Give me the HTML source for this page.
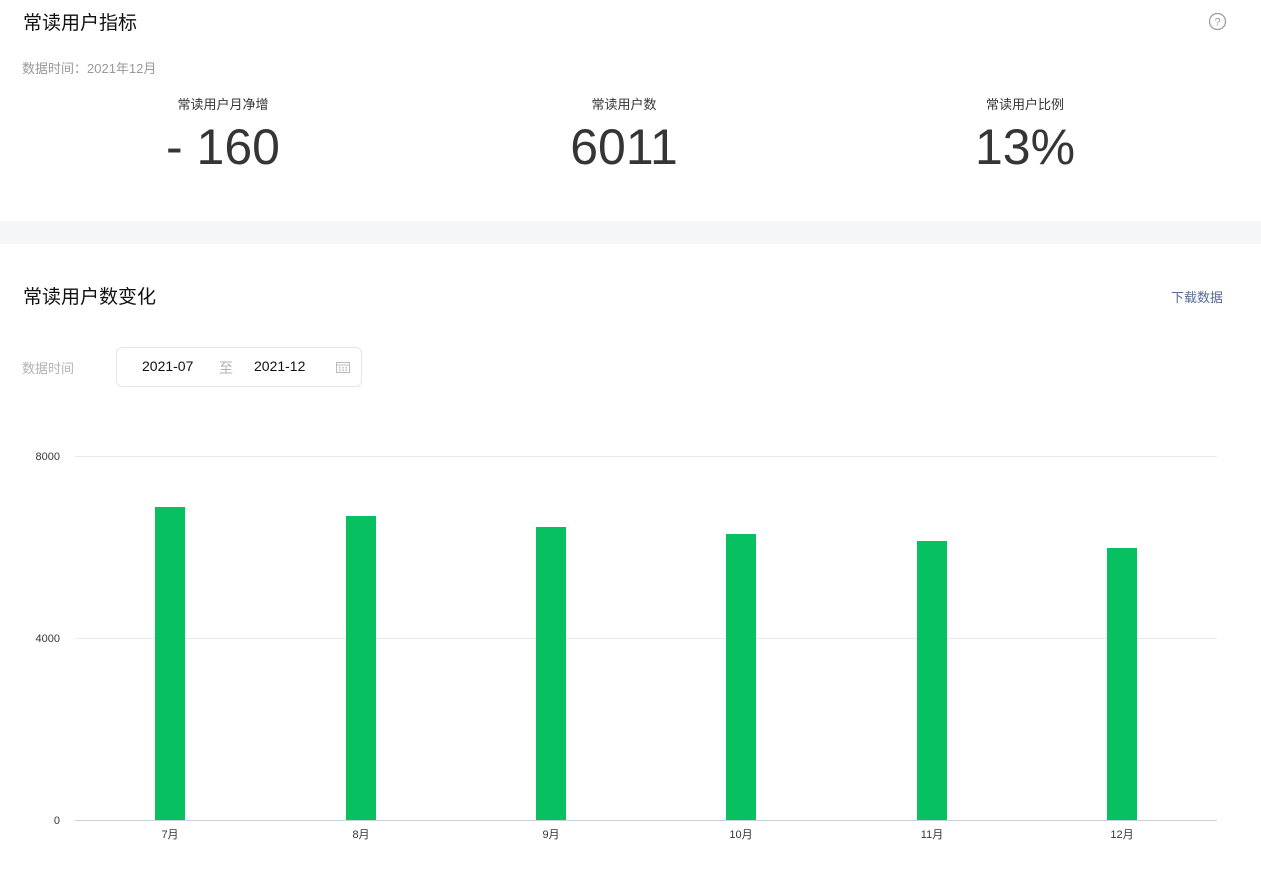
<html><head><style>
body{margin:0;width:1261px;height:889px;background:#fff;font-family:"Liberation Sans","Noto Sans CJK SC",sans-serif;position:relative;overflow:hidden}
.a{position:absolute;white-space:nowrap}
.bar{position:absolute;width:30px;background:#07c160;bottom:69px}
.g{position:absolute;left:75px;width:1142px;height:1px;background:#e7e9ec}
.yl{position:absolute;font-size:11px;color:#353535;width:60px;text-align:right;left:0}
.xl{position:absolute;top:826px;font-size:11px;color:#353535;width:60px;text-align:center}
</style></head><body>
<div class="a" style="left:23px;top:8px;font-size:19px;color:#111">常读用户指标</div>
<svg class="a" style="left:1208px;top:12px" width="19" height="19" viewBox="0 0 19 19"><circle cx="9.5" cy="9.5" r="8" fill="none" stroke="#999" stroke-width="1.2"/><text x="9.5" y="13.5" text-anchor="middle" font-size="11" fill="#999" font-family="Liberation Sans">?</text></svg>
<div class="a" style="left:22px;top:58px;font-size:13px;color:#999">数据时间：2021年12月</div>
<div class="a" style="left:123px;width:200px;text-align:center;top:94px;font-size:13px;color:#353535">常读用户月净增</div>
<div class="a" style="left:123px;width:200px;text-align:center;top:118px;font-size:50px;color:#353535">- 160</div>
<div class="a" style="left:524px;width:200px;text-align:center;top:94px;font-size:13px;color:#353535">常读用户数</div>
<div class="a" style="left:524px;width:200px;text-align:center;top:118px;font-size:50px;color:#353535">6011</div>
<div class="a" style="left:925px;width:200px;text-align:center;top:94px;font-size:13px;color:#353535">常读用户比例</div>
<div class="a" style="left:925px;width:200px;text-align:center;top:118px;font-size:50px;color:#353535">13%</div>
<div class="a" style="left:0;top:221px;width:1261px;height:23px;background:#f5f6f7"></div>
<div class="a" style="left:23px;top:282px;font-size:19px;color:#111">常读用户数变化</div>
<div class="a" style="left:1171px;top:287px;font-size:13px;color:#576b95">下载数据</div>
<div class="a" style="left:22px;top:358px;font-size:13px;color:#b2b2b2">数据时间</div>
<div class="a" style="left:116px;top:347px;width:244px;height:38px;border:1px solid #e5e5e5;border-radius:6px"></div>
<div class="a" style="left:142px;top:358px;font-size:14px;color:#111">2021-07</div>
<div class="a" style="left:219px;top:358px;font-size:14px;color:#b2b2b2">至</div>
<div class="a" style="left:254px;top:358px;font-size:14px;color:#111">2021-12</div>
<svg class="a" style="left:335px;top:360px" width="16" height="14" viewBox="0 0 16 14"><rect x="1.5" y="2.5" width="13" height="10" fill="none" stroke="#bbb"/><line x1="1.5" y1="5" x2="14.5" y2="5" stroke="#bbb"/><g fill="#bbb"><rect x="4" y="7" width="1.5" height="1.5"/><rect x="7.3" y="7" width="1.5" height="1.5"/><rect x="10.5" y="7" width="1.5" height="1.5"/><rect x="4" y="9.5" width="1.5" height="1.5"/><rect x="7.3" y="9.5" width="1.5" height="1.5"/><rect x="10.5" y="9.5" width="1.5" height="1.5"/></g></svg>
<div class="g" style="top:456px"></div>
<div class="g" style="top:638px"></div>
<div class="g" style="top:820px;background:#c9d3de"></div>
<div class="yl" style="top:451px">8000</div>
<div class="yl" style="top:633px">4000</div>
<div class="yl" style="top:815px">0</div>
<div class="bar" style="left:155px;top:507px"></div>
<div class="bar" style="left:346px;top:516px"></div>
<div class="bar" style="left:536px;top:527px"></div>
<div class="bar" style="left:726px;top:534px"></div>
<div class="bar" style="left:917px;top:541px"></div>
<div class="bar" style="left:1107px;top:548px"></div>
<div class="xl" style="left:140px">7月</div>
<div class="xl" style="left:331px">8月</div>
<div class="xl" style="left:521px">9月</div>
<div class="xl" style="left:711px">10月</div>
<div class="xl" style="left:902px">11月</div>
<div class="xl" style="left:1092px">12月</div>
</body></html>
